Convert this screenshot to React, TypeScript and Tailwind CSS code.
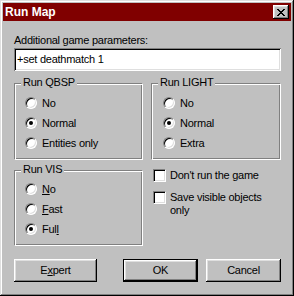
import React from "react";

const raised =
  "shadow-[inset_-1px_-1px_#000,inset_1px_1px_#fff,inset_-2px_-2px_#808080,inset_2px_2px_#dfdfdf]";
const etched =
  "relative border border-t-[#808080] border-l-[#808080] border-r-white border-b-white shadow-[inset_1px_1px_#fff,inset_-1px_-1px_#808080]";

function Radio({ checked, children }: { checked?: boolean; children: React.ReactNode }) {
  return (
    <div className="flex h-[20px] items-center gap-[5px]">
      <span className="flex h-[12px] w-[12px] shrink-0 items-center justify-center rounded-full border border-t-[#808080] border-l-[#808080] border-b-white border-r-white bg-white shadow-[inset_1px_1px_#000,inset_-1px_-1px_#dfdfdf]">
        {checked && <span className="h-[4px] w-[4px] rounded-full bg-black" />}
      </span>
      <span className="leading-[13px]">{children}</span>
    </div>
  );
}

function Check({ children }: { children: React.ReactNode }) {
  return (
    <div className="flex items-start gap-[4px]">
      <span className="h-[13px] w-[13px] shrink-0 border border-t-[#808080] border-l-[#808080] border-b-white border-r-white bg-white shadow-[inset_1px_1px_#000,inset_-1px_-1px_#dfdfdf]" />
      <span className="leading-[13px]">{children}</span>
    </div>
  );
}

function Legend({ children }: { children: React.ReactNode }) {
  return (
    <span className="absolute -top-[8px] left-[6px] bg-[#c0c0c0] px-[2px] leading-[13px]">
      {children}
    </span>
  );
}

export default function App() {
  return (
    <div className="flex h-[296px] w-[294px] flex-col bg-[#c0c0c0] p-[3px] font-['Liberation_Sans',Arial,sans-serif] text-[11px] tracking-[-0.25px] text-black shadow-[inset_-1px_-1px_#000,inset_1px_1px_#dfdfdf,inset_-2px_-2px_#808080,inset_2px_2px_#fff]">
      {/* Title bar */}
      <div className="flex h-[18px] items-center justify-between bg-[#800000] pl-[2px] pr-[2px]">
        <span className="text-[12px] font-bold leading-[14px] tracking-[0px] text-white">Run Map</span>
        <button className={`flex h-[14px] w-[16px] items-center justify-center bg-[#c0c0c0] ${raised}`}>
          <svg width="8" height="7" viewBox="0 0 8 7" shapeRendering="crispEdges">
            <path
              fill="#000"
              d="M0 0h2v1H0zM6 0h2v1H6zM1 1h2v1H1zM5 1h2v1H5zM2 2h4v1H2zM3 3h2v1H3zM2 4h4v1H2zM1 5h2v1H1zM5 5h2v1H5zM0 6h2v1H0zM6 6h2v1H6z"
            />
          </svg>
        </button>
      </div>

      {/* Body */}
      <div className="flex flex-1 flex-col pl-[11px] pr-[10px]">
        <div className="mt-[13px] leading-[13px]">Additional game parameters:</div>
        <div className="mt-[1px] flex h-[23px] items-center bg-white pl-[3px] leading-[13px] shadow-[inset_1px_1px_#808080,inset_-1px_-1px_#fff,inset_2px_2px_#000,inset_-2px_-2px_#dfdfdf]">
          +set deathmatch 1
        </div>

        <div className="mt-[12px] flex gap-[8px]">
          {/* Left column */}
          <div className="flex w-[129px] flex-col gap-[10px]">
            <div className={`${etched} h-[77px] pl-[10px] pt-[9px]`}>
              <Legend>Run QBSP</Legend>
              <Radio>No</Radio>
              <Radio checked>Normal</Radio>
              <Radio>Entities only</Radio>
            </div>
            <div className={`${etched} h-[76px] pl-[10px] pt-[8px]`}>
              <Legend>Run VIS</Legend>
              <Radio>
                <u>N</u>o
              </Radio>
              <Radio>
                <u>F</u>ast
              </Radio>
              <Radio checked>
                Ful<u>l</u>
              </Radio>
            </div>
          </div>

          {/* Right column */}
          <div className="flex w-[130px] flex-col">
            <div className={`${etched} h-[77px] pl-[11px] pt-[9px]`}>
              <Legend>Run LIGHT</Legend>
              <Radio>No</Radio>
              <Radio checked>Normal</Radio>
              <Radio>Extra</Radio>
            </div>
            <div className="mt-[9px] flex flex-col gap-[9px] pl-[2px]">
              <Check>Don't run the game</Check>
              <Check>Save visible objects only</Check>
            </div>
          </div>
        </div>

        {/* Buttons */}
        <div className="mt-[13px] flex">
          <button className={`h-[23px] w-[83px] bg-[#c0c0c0] leading-[13px] ${raised}`}>
            E<u>x</u>pert
          </button>
          <button className={`ml-[26px] h-[23px] w-[75px] border border-black bg-[#c0c0c0] leading-[13px] ${raised}`}>
            OK
          </button>
          <button className={`ml-[8px] h-[23px] w-[75px] bg-[#c0c0c0] leading-[13px] ${raised}`}>
            Cancel
          </button>
        </div>
      </div>
    </div>
  );
}
